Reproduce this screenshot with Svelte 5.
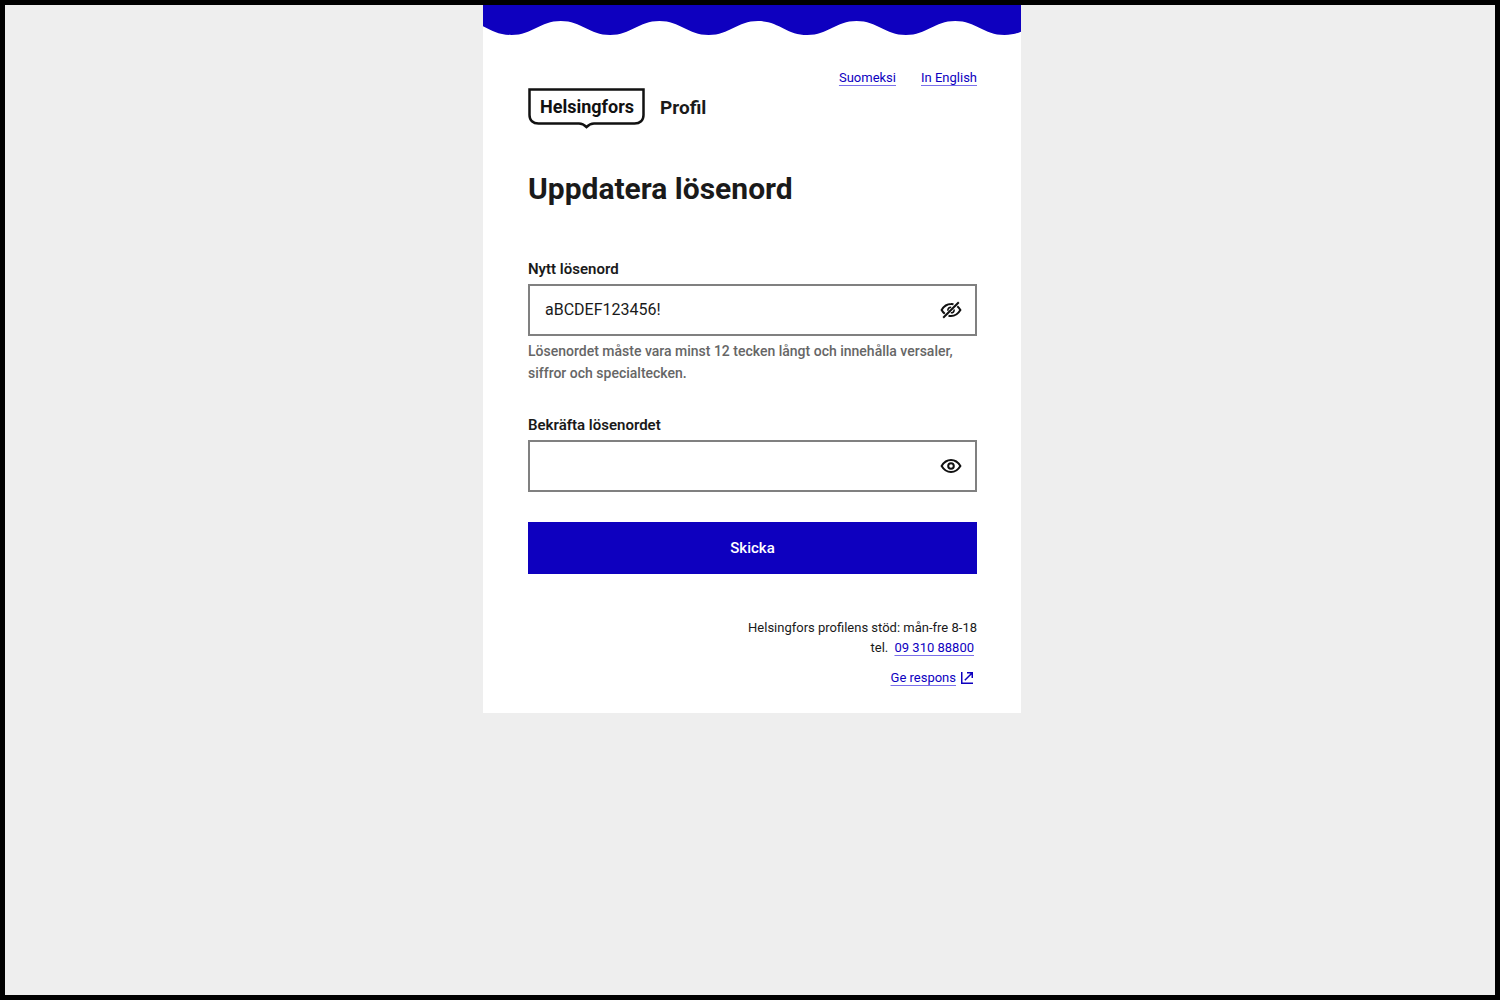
<script>
  let password = $state('aBCDEF123456!');
  let confirmation = $state('');
  let showPassword = $state(true);
  let showConfirmation = $state(false);

  // Wave along the lower edge of the header: troughs and crests alternate every half period.
  const half = 49.3;
  const firstTrough = 28.5;
  let wave = `M${firstTrough - 2 * half} 0V30`;
  for (let i = -1; i < 12; i++) {
    const x = firstTrough + i * half;
    const y = i % 2 === 0 ? 30 : 16;
    wave += `S${x - 21} ${y} ${x} ${y}`;
  }
  wave += 'V0Z';
</script>

{#snippet eye(open)}
  <svg viewBox="0 0 24 24" width="24" height="24" fill="none" stroke="#111" stroke-width="2" aria-hidden="true">
    {#if open}
      <path d="M2.600 12C5 8 8.200 6 12 6s7 2 9.400 6c-2.400 4-5.600 6-9.400 6s-7-2-9.400-6Z" />
      <circle cx="12" cy="12" r="2.800" />
    {:else}
      <path d="M14.500 6.200A11 11 0 0 0 12 6C8.200 6 5 8 2.600 12c.9 1.600 2 2.800 3.200 3.800M18.300 8.200c1.200 1 2.200 2.300 3.100 3.800-2.400 4-5.600 6-9.400 6-.9 0-1.700-.1-2.500-.3" />
      <path d="M8.800 12.800C8.800 10.500 10 9.200 12.200 9.200M15.200 11.400C15.200 13.500 14 14.800 11.800 14.800" stroke-width="1.600" />
      <path d="M4.200 19.800 19.800 4.200" />
    {/if}
  </svg>
{/snippet}

<div class="page">
  <main class="card">
    <svg class="wave" height="30" fill="#0e00bf" aria-hidden="true"><path d={wave} /></svg>

    <div class="content">
      <nav class="languages">
        <a href="#fi" lang="fi">Suomeksi</a>
        <a href="#en" lang="en">In English</a>
      </nav>

      <header class="brand">
        <div class="logo">
          <svg viewBox="0 0 118 42" width="118" height="42" fill="none" stroke="#111" stroke-width="2.500" aria-hidden="true">
            <path d="M1.500 1.500H115.500V27C115.500 32.500 112 35.500 106.500 35.500H66C62 35.500 60.500 37 58.500 39C56.500 37 55 35.500 51 35.500H10.500C5 35.500 1.500 32.500 1.500 27Z" />
          </svg>
          <span>Helsingfors</span>
        </div>
        <span class="service">Profil</span>
      </header>

      <h1>Uppdatera lösenord</h1>

      <form onsubmit={(event) => event.preventDefault()}>
        <label for="password">Nytt lösenord</label>
        <div class="field">
          <input id="password" type={showPassword ? 'text' : 'password'} bind:value={password} aria-describedby="hint" />
          <button type="button" class="toggle" aria-label="Visa eller dölj lösenordet" onclick={() => (showPassword = !showPassword)}>
            {@render eye(!showPassword)}
          </button>
        </div>
        <p id="hint" class="hint">Lösenordet måste vara minst 12 tecken långt och innehålla versaler, siffror och specialtecken.</p>

        <label for="confirmation">Bekräfta lösenordet</label>
        <div class="field">
          <input id="confirmation" type={showConfirmation ? 'text' : 'password'} bind:value={confirmation} />
          <button type="button" class="toggle" aria-label="Visa eller dölj bekräftelsen" onclick={() => (showConfirmation = !showConfirmation)}>
            {@render eye(!showConfirmation)}
          </button>
        </div>

        <button type="submit" class="submit">Skicka</button>
      </form>

      <footer>
        <p>Helsingfors profilens stöd: mån-fre 8-18</p>
        <p class="inset">tel. <a href="tel:0931088800">09 310 88800</a></p>
        <p class="inset feedback">
          <a href="#respons">Ge respons</a>
          <svg viewBox="0 0 14 14" width="14" height="14" fill="none" stroke="#0e00bf" stroke-width="1.500" aria-hidden="true">
            <path d="M1.750 1v11.250H13M4.800 9.200l7-7M7 1.750h5.250V7" />
          </svg>
        </p>
      </footer>
    </div>
  </main>
</div>

<style>
  :global(body) {
    margin: 0;
  }

  .page {
    box-sizing: border-box;
    min-height: 100vh;
    padding-left: 4px;
    border: 5px solid #000;
    background: #eee;
    color: #1a1a1a;
    font-family: Roboto, 'Liberation Sans', sans-serif;
  }

  .card {
    max-width: 538px;
    margin: 0 auto;
    background: #fff;
  }

  .wave {
    display: block;
    width: 100%;
    overflow: hidden;
  }

  .content {
    padding: 33px 44px 25px 45px;
  }

  a {
    color: #0e00bf;
    text-decoration: underline;
    text-decoration-color: #7a70ea;
    text-decoration-thickness: 1px;
    text-underline-offset: 3px;
  }

  .languages {
    display: flex;
    justify-content: flex-end;
    gap: 25px;
    font-size: 13px;
    line-height: 20px;
  }

  .brand {
    display: flex;
    align-items: flex-start;
    gap: 14px;
  }

  .logo {
    display: grid;
    width: 118px;
    color: #111;
    font-size: 18px;
    font-weight: 700;
    line-height: 38px;
    text-align: center;
  }

  .logo > * {
    grid-area: 1 / 1;
  }

  .service {
    font-size: 19px;
    font-weight: 700;
    line-height: 40px;
  }

  h1 {
    margin: 39px 0 49px;
    font-size: 30px;
    font-weight: 700;
    line-height: 40px;
  }

  label {
    display: block;
    margin-bottom: 4px;
    font-size: 15px;
    font-weight: 600;
    line-height: 22px;
  }

  .field {
    display: flex;
    align-items: center;
    box-sizing: border-box;
    height: 52px;
    padding-right: 12px;
    border: 2px solid #808080;
  }

  .field input {
    flex: 1;
    min-width: 0;
    padding: 0 15px;
    border: 0;
    outline: 0;
    background: none;
    color: inherit;
    font: inherit;
    font-size: 16px;
    line-height: 24px;
  }

  .toggle {
    display: flex;
    padding: 0;
    border: 0;
    background: none;
    cursor: pointer;
  }

  .hint {
    margin: 4px 0 30px;
    color: #666;
    font-size: 14px;
    font-weight: 500;
    line-height: 22px;
  }

  .submit {
    display: block;
    width: 100%;
    height: 52px;
    margin-top: 30px;
    border: 0;
    background: #0e00bf;
    color: #fff;
    font: inherit;
    font-size: 15px;
    font-weight: 500;
    cursor: pointer;
  }

  footer {
    margin-top: 44px;
    font-size: 13px;
    line-height: 20px;
    text-align: right;
  }

  footer p {
    margin: 0;
  }

  footer .inset {
    padding-right: 3px;
  }

  .inset a {
    margin-left: 3px;
  }

  footer .feedback {
    display: flex;
    justify-content: flex-end;
    align-items: center;
    gap: 4px;
    margin-top: 10px;
  }
</style>
